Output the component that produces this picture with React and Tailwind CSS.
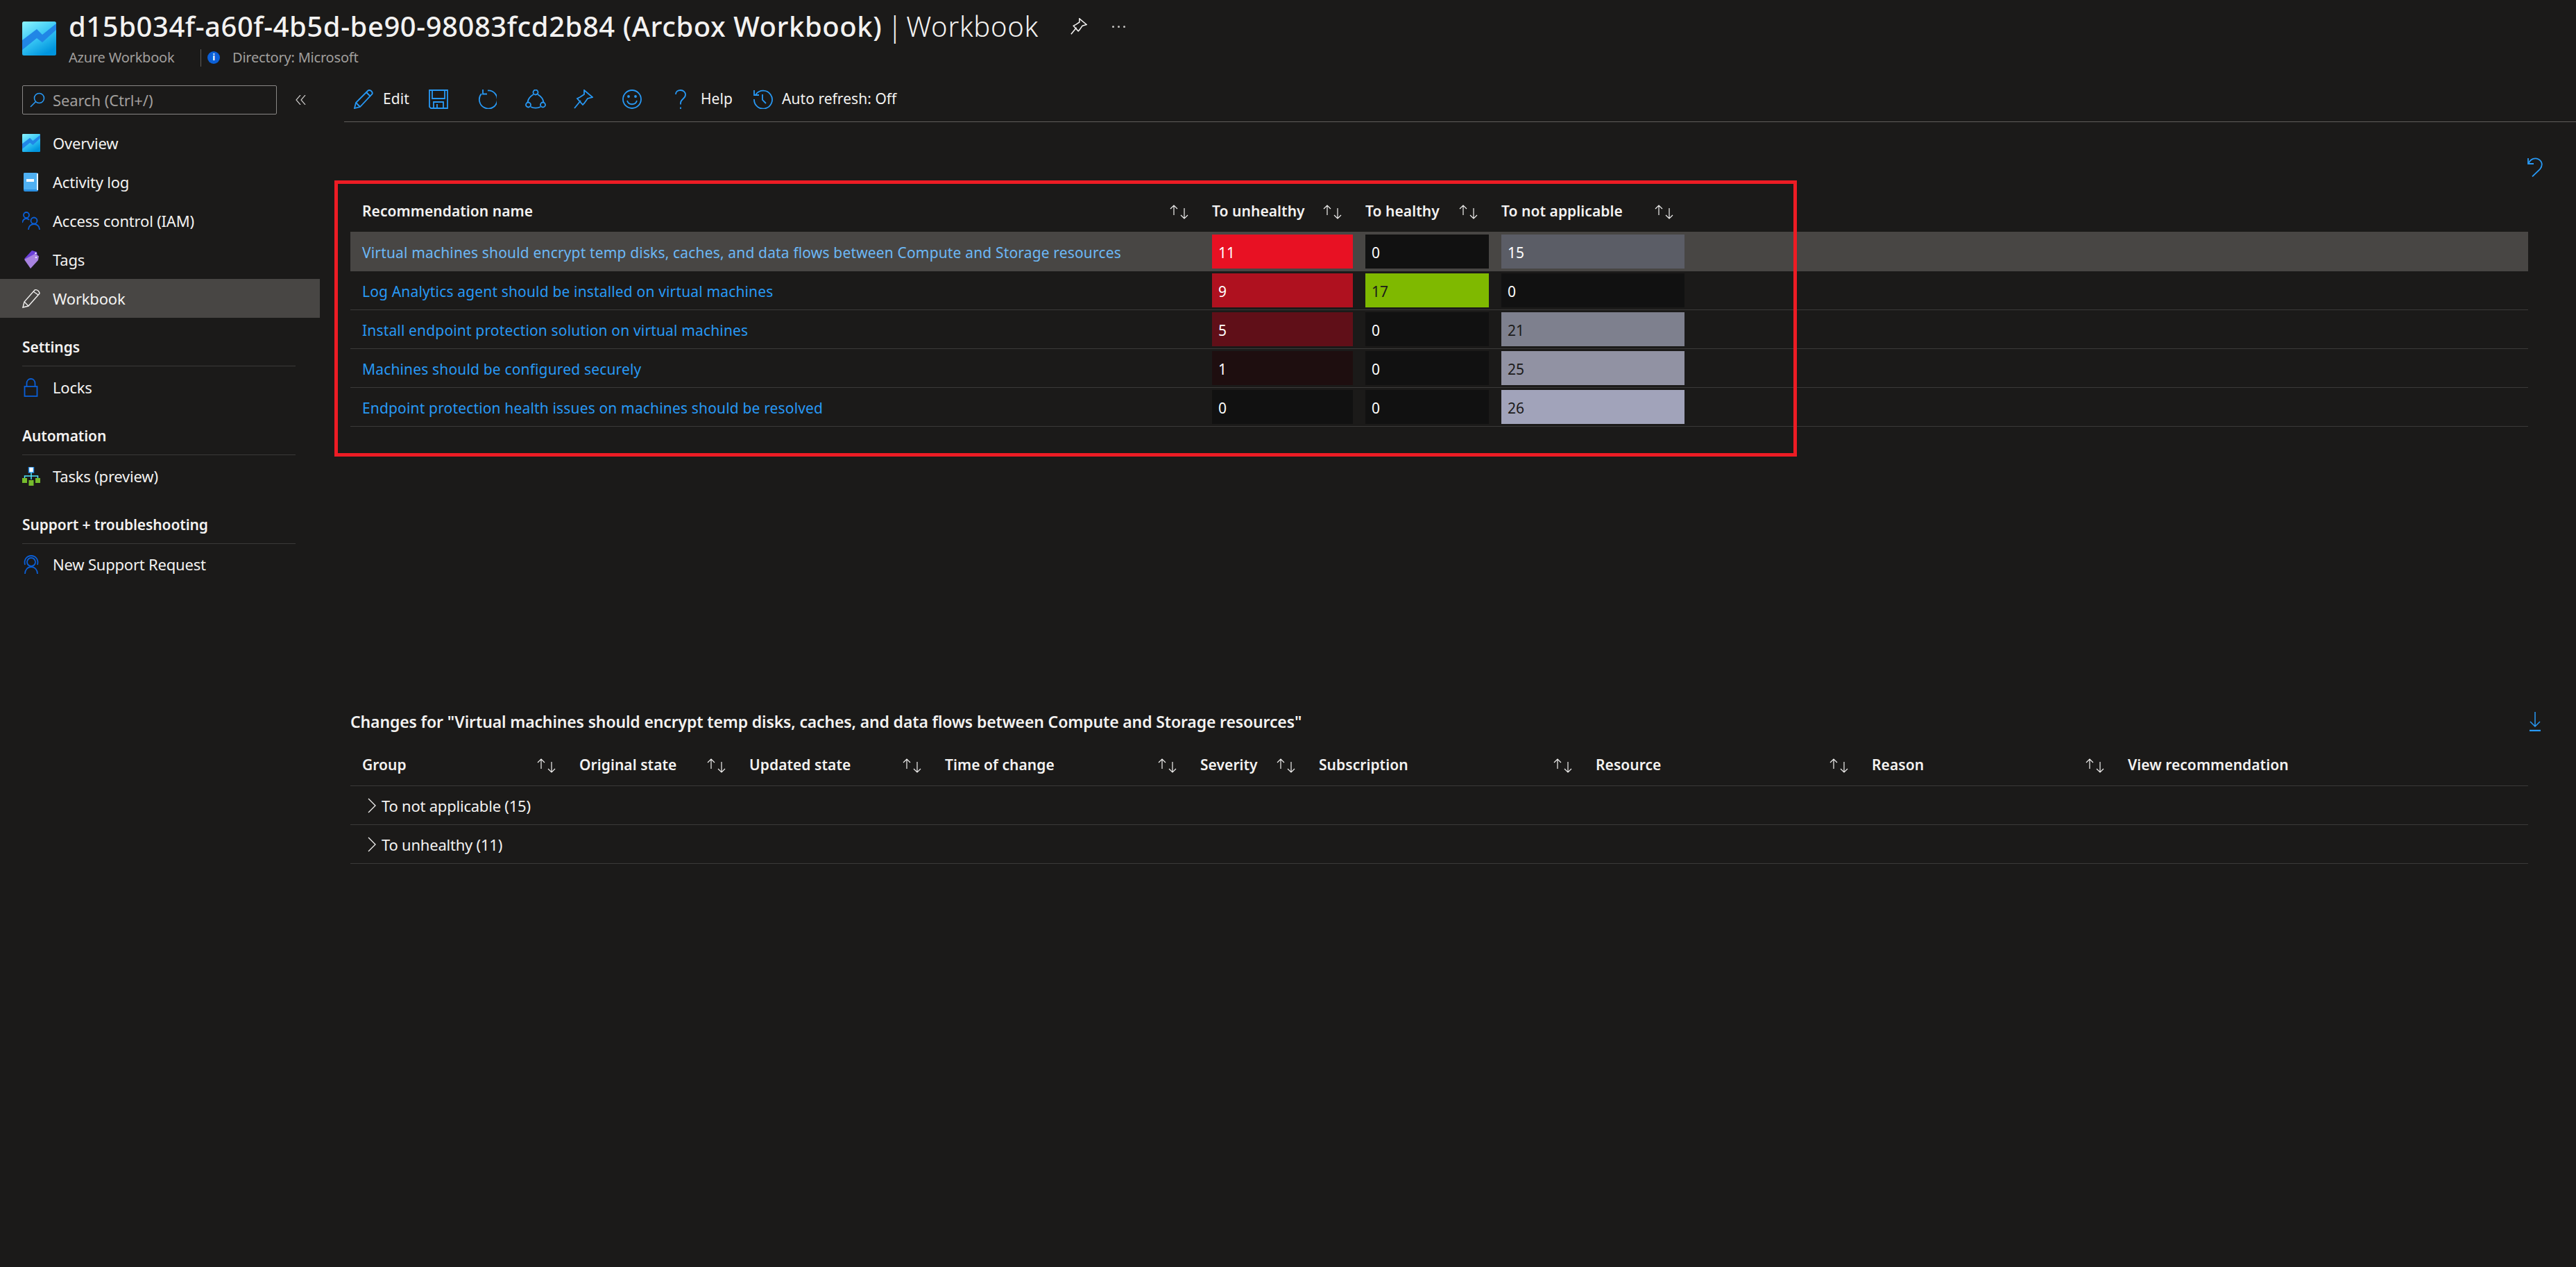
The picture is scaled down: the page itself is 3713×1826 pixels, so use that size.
const F = { fontFamily: '"Noto Sans", sans-serif' };

function Sort() {
  return (
    <svg width="29" height="21" viewBox="0 0 29 21" fill="none" stroke="#f3f2f1" strokeWidth="1.2" className="shrink-0">
      <path d="M7 15V1M2 6l5-5 5 5" />
      <path d="M22 5v15M17 15l5 5 5-5" />
    </svg>
  );
}

function Logo({ s }) {
  return (
    <svg width={s} height={s} viewBox="0 0 49 49" className="shrink-0">
      <defs>
        <linearGradient id={`lg${s}`} x1="0" y1="0" x2="0.6" y2="1">
          <stop offset="0" stopColor="#8cf4ff" />
          <stop offset="0.55" stopColor="#38c6f4" />
          <stop offset="1" stopColor="#0095de" />
        </linearGradient>
      </defs>
      <rect width="49" height="49" rx="2.5" fill={`url(#lg${s})`} />
      <path d="M0 27 L21 11 L29 19 L49 3 V12 L29 30 L21 24 L0 41 Z" fill="#2186e6" />
    </svg>
  );
}

const blue = '#0b5fd6';
const tb = '#2899f5';

function NavIcon({ k }) {
  if (k === 'overview') return <Logo s={26} />;
  if (k === 'log')
    return (
      <svg width="26" height="27" viewBox="0 0 26 27">
        <rect x="2" y="0" width="21" height="27" rx="2" fill="#2a8fe0" />
        <rect x="2" y="0" width="19" height="24" rx="1.5" fill="#4fb0f2" />
        <rect x="21" y="1" width="2" height="24" fill="#e6f3fc" />
        <rect x="6" y="9" width="11" height="4" fill="#f2f8fd" />
      </svg>
    );
  if (k === 'iam')
    return (
      <svg width="26" height="28" viewBox="0 0 26 28" fill="none" stroke={blue} strokeWidth="1.8">
        <circle cx="6" cy="6" r="4" />
        <path d="M0 17c1-4 3-6 6-6 2 0 3 .6 4 2" />
        <circle cx="17" cy="14" r="4.5" />
        <path d="M9 27c0-5 3.500-8 8-8s8 3 8 8" />
      </svg>
    );
  if (k === 'tags')
    return (
      <svg width="26" height="27" viewBox="0 0 26 27">
        <path d="M3 12 L14 0 L21 2 L22 7 L11 17 Z" fill="#6a3fd8" />
        <path d="M3 13 L18 5 L24 8 L23 14 L12 26 Z" fill="#a883e0" />
        <circle cx="19.500" cy="4" r="1.300" fill="#e9e2f8" />
        <circle cx="20" cy="10" r="1.300" fill="#e9e2f8" />
      </svg>
    );
  if (k === 'wb')
    return (
      <svg width="26" height="27" viewBox="0 0 26 27" fill="none" stroke="#f3f2f1" strokeWidth="1.4">
        <path d="M1 26 L3 18 L18 1 Q20 0 23 2 Q25 4 25 6 L9 24 Z" />
        <path d="M3 18 L9 24 M16 3 L23 8" />
      </svg>
    );
  if (k === 'lock')
    return (
      <svg width="26" height="27" viewBox="0 0 26 27" fill="none" stroke={blue} strokeWidth="1.8">
        <rect x="3.500" y="12" width="18" height="14" />
        <path d="M6.500 12V7.500C6.500 3.500 9 1 12.500 1s6 2.500 6 6.500V12" />
      </svg>
    );
  if (k === 'tasks')
    return (
      <svg width="26" height="27" viewBox="0 0 26 27">
        <rect x="9.500" y="0" width="7" height="8" fill="#fff" stroke="#1e88e5" strokeWidth="1.500" />
        <path d="M13 8v10M3.500 17v-4h19v4" fill="none" stroke="#50e6ff" strokeWidth="1.500" />
        <rect x="0" y="16" width="7" height="7" fill="#76bc2d" />
        <rect x="9.500" y="19" width="7" height="8" fill="#76bc2d" />
        <rect x="19" y="16" width="7" height="7" fill="#76bc2d" />
      </svg>
    );
  return (
    <svg width="26" height="27" viewBox="0 0 26 27" fill="none" stroke={blue} strokeWidth="1.8">
      <path d="M4 14C2 6 7 1 13 1s11 5 9 13" />
      <circle cx="13" cy="10" r="6" />
      <path d="M4 27c0-6 4-10 9-10s9 4 9 10" />
    </svg>
  );
}

function NavItem({ k, label, active, className = '' }) {
  return (
    <div className={`flex items-center h-[56px] pl-[32px] ${active ? 'bg-[#484644]' : ''} ${className}`}>
      <span className="w-[26px] flex justify-center shrink-0"><NavIcon k={k} /></span>
      <span className="ml-[18px] text-[22px] tracking-[-0.2px] text-[#f3f2f1]">{label}</span>
    </div>
  );
}

function NavHead({ label }) {
  return (
    <div className="h-[70px] ml-[32px] w-[394px] flex items-end pb-[12px] border-b border-[#3b3a39]">
      <span className="text-[21px] leading-[30px] font-semibold tracking-[-0.1px] text-[#f3f2f1]">{label}</span>
    </div>
  );
}

function TbIcon({ k }) {
  const p = { fill: 'none', stroke: tb, strokeWidth: 1.8 };
  if (k === 'edit')
    return (
      <svg width="28" height="28" viewBox="0 0 28 28" {...p}>
        <path d="M1 27 L3 19 L20 2 Q22 0 25 2 Q28 5 26 7 L9 25 Z" />
        <path d="M3 19 L9 25 M18 4 L24 10" />
      </svg>
    );
  if (k === 'save')
    return (
      <svg width="28" height="28" viewBox="0 0 28 28" {...p}>
        <path d="M1 1H27V27H3L1 25Z" />
        <path d="M5 1V13H23V1M7 27V18H21V27M12 21V27" />
      </svg>
    );
  if (k === 'refresh')
    return (
      <svg width="28" height="28" viewBox="0 0 28 28" {...p}>
        <path d="M6 6A13 13 0 1 0 15 1.500" />
        <path d="M8 0V6.500H14" />
      </svg>
    );
  if (k === 'share')
    return (
      <svg width="30" height="28" viewBox="0 0 30 28" {...p}>
        <circle cx="15" cy="4" r="3.500" />
        <circle cx="4.500" cy="22" r="3.500" />
        <circle cx="25.500" cy="22" r="3.500" />
        <path d="M12 7C7 10 4 14 3.500 18.500M18 7C23 10 26 14 26.500 18.500M8 25C12 27 18 27 22 25" />
      </svg>
    );
  if (k === 'pin')
    return (
      <svg width="28" height="28" viewBox="0 0 28 28" {...p}>
        <path d="M1 27L10 16M15 1L27 11 20 13 15 20 13 22 5 13 9 11 15 7Z" />
      </svg>
    );
  if (k === 'smile')
    return (
      <svg width="28" height="28" viewBox="0 0 28 28" {...p}>
        <circle cx="14" cy="14" r="13" />
        <circle cx="9" cy="10" r="1" />
        <circle cx="19" cy="10" r="1" />
        <path d="M7 16C9 23 19 23 21 16" />
      </svg>
    );
  if (k === 'help')
    return (
      <svg width="18" height="28" viewBox="0 0 18 28" {...p}>
        <path d="M2 7C2 3 5 1 9 1s7 3 7 6.500c0 6-7 6-7 12v2" />
        <path d="M9 25.500V28" />
      </svg>
    );
  return (
    <svg width="29" height="28" viewBox="0 0 29 28" {...p}>
      <path d="M4.500 7A13 13 0 1 1 2 14" />
      <path d="M2 1V8H9M14 7V15L19 20" />
    </svg>
  );
}

function TbLabel({ children }) {
  return <span className="text-[21px] tracking-[0.05px] text-[#f3f2f1] whitespace-nowrap">{children}</span>;
}

const rows = [
  { name: 'Virtual machines should encrypt temp disks, caches, and data flows between Compute and Storage resources',
    a: ['11', 'bg-[#e81123]', 'text-white'], b: ['0', 'bg-[#111111]', 'text-white'], c: ['15', 'bg-[#5b5d66]', 'text-white'] },
  { name: 'Log Analytics agent should be installed on virtual machines',
    a: ['9', 'bg-[#af111f]', 'text-white'], b: ['17', 'bg-[#7fb900]', 'text-[#1b1a19]'], c: ['0', 'bg-[#111111]', 'text-white'] },
  { name: 'Install endpoint protection solution on virtual machines',
    a: ['5', 'bg-[#600f18]', 'text-white'], b: ['0', 'bg-[#111111]', 'text-white'], c: ['21', 'bg-[#7e808e]', 'text-[#1b1a19]'] },
  { name: 'Machines should be configured securely',
    a: ['1', 'bg-[#1e0e0f]', 'text-white'], b: ['0', 'bg-[#111111]', 'text-white'], c: ['25', 'bg-[#9192a3]', 'text-[#1b1a19]'] },
  { name: 'Endpoint protection health issues on machines should be resolved',
    a: ['0', 'bg-[#111111]', 'text-white'], b: ['0', 'bg-[#111111]', 'text-white'], c: ['26', 'bg-[#a1a3ba]', 'text-[#1b1a19]'] },
];

function Cell({ d, w }) {
  return (
    <div className={`h-[49px] ${w} ${d[1]} ${d[2]} pl-[9px] flex items-center pt-[4px] text-[21px]`}>{d[0]}</div>
  );
}

function Head({ label, w, pl = 'pl-0' }) {
  return (
    <div className={`${w} ${pl} pr-[33px] shrink-0 flex items-center justify-between`}>
      <span className="text-[21px] font-semibold tracking-[0.05px] text-[#f3f2f1] whitespace-nowrap">{label}</span>
      <Sort />
    </div>
  );
}

const lower = [
  ['Group', 'w-[330px]', 'pl-[17px]'], ['Original state', 'w-[245px]'], ['Updated state', 'w-[282px]'], ['Time of change', 'w-[368px]'],
  ['Severity', 'w-[171px]'], ['Subscription', 'w-[399px]'], ['Resource', 'w-[398px]'], ['Reason', 'w-[369px]'],
];

export default function App() {
  return (
    <div className="w-full min-h-screen bg-[#1b1a19] overflow-hidden" style={F}>
      <header className="h-[110px] pt-[13px] pl-[32px] flex items-start">
        <div className="mt-[18px] mr-[18px]"><Logo s={49} /></div>
        <div>
          <div className="flex items-center h-[50px]">
            <h1 className="text-[40px] leading-[50px] text-[#f3f2f1] whitespace-nowrap">
              <span className="font-medium tracking-[0.55px]">d15b034f-a60f-4b5d-be90-98083fcd2b84 (Arcbox Workbook)</span>
              <span className="font-light tracking-[-2.5px]"> | </span>
              <span className="font-light tracking-[0.7px]">Workbook</span>
            </h1>
            <svg width="24" height="24" viewBox="0 0 28 28" fill="none" stroke="#f3f2f1" strokeWidth="1.800" className="ml-[46px]">
              <path d="M1 27L10 16M15 1L27 11 20 13 15 20 13 22 5 13 9 11 15 7Z" />
            </svg>
            <span className="ml-[36px] flex gap-[5px]">
              <i className="block w-[3px] h-[3px] bg-[#c8c6c4] rounded-full" />
              <i className="block w-[3px] h-[3px] bg-[#c8c6c4] rounded-full" />
              <i className="block w-[3px] h-[3px] bg-[#c8c6c4] rounded-full" />
            </span>
          </div>
          <div className="mt-[5px] flex items-center h-[30px] text-[20px] tracking-[-0.2px] text-[#a19f9d]">
            <span className="w-[190px] whitespace-nowrap">Azure Workbook</span>
            <span className="w-[1px] h-[25px] bg-[#605e5c]" />
            <span className="ml-[9px] w-[18px] h-[18px] rounded-full bg-[#0b5fd6] text-white text-[13px] font-bold flex items-center justify-center">i</span>
            <span className="ml-[18px] whitespace-nowrap">Directory: Microsoft</span>
          </div>
        </div>
      </header>

      <div className="flex">
        <aside className="w-[461px] shrink-0">
          <div className="flex items-center h-[42px] mt-[13px] ml-[32px] mb-[13px]">
            <div className="w-[367px] h-[42px] border border-[#8a8886] rounded-[2px] flex items-center pl-[10px]">
              <svg width="22" height="22" viewBox="0 0 22 22" fill="none" stroke={tb} strokeWidth="1.600">
                <circle cx="13.500" cy="8.500" r="7" />
                <path d="M8.500 13.500L1 21" />
              </svg>
              <span className="ml-[11px] text-[22px] tracking-[-0.1px] text-[#a19f9d]">Search (Ctrl+/)</span>
            </div>
            <svg width="15" height="14" viewBox="0 0 15 14" fill="none" stroke="#c8c6c4" strokeWidth="1.200" className="ml-[27px]">
              <path d="M7 0L1 7l6 7M14 0L8 7l6 7" />
            </svg>
          </div>
          <NavItem k="overview" label="Overview" />
          <NavItem k="log" label="Activity log" />
          <NavItem k="iam" label="Access control (IAM)" />
          <NavItem k="tags" label="Tags" />
          <NavItem k="wb" label="Workbook" active />
          <NavHead label="Settings" />
          <NavItem k="lock" label="Locks" className="mt-[2px]" />
          <NavHead label="Automation" />
          <NavItem k="tasks" label="Tasks (preview)" className="mt-[2px]" />
          <NavHead label="Support + troubleshooting" />
          <NavItem k="support" label="New Support Request" className="mt-[1px]" />
        </aside>

        <main className="flex-1 min-w-0">
          <div className="h-[66px] ml-[35px] pl-[14px] pt-[1px] border-b border-[#605e5c] flex items-center">
            <TbIcon k="edit" />
            <span className="ml-[14px] w-[38px]"><TbLabel>Edit</TbLabel></span>
            <span className="ml-[28px] flex"><TbIcon k="save" /></span>
            <span className="ml-[42px] flex"><TbIcon k="refresh" /></span>
            <span className="ml-[41px] flex"><TbIcon k="share" /></span>
            <span className="ml-[40px] flex"><TbIcon k="pin" /></span>
            <span className="ml-[42px] flex"><TbIcon k="smile" /></span>
            <span className="ml-[47px] flex"><TbIcon k="help" /></span>
            <span className="ml-[20px] w-[46px]"><TbLabel>Help</TbLabel></span>
            <span className="ml-[29px] flex"><TbIcon k="history" /></span>
            <span className="ml-[13px]"><TbLabel>Auto refresh: Off</TbLabel></span>
          </div>

          <div className="ml-[44px] mr-[69px]">
            <div className="mt-[51px] h-[28px] flex justify-end mr-[-21px]">
              <svg width="22" height="28" viewBox="0 0 22 28" fill="none" stroke={tb} strokeWidth="1.800">
                <path d="M1 1V9H9" />
                <path d="M1.500 8.500C5 1.500 11 0 16 2.500 22 6 22 12 18 17L7 27.500" />
              </svg>
            </div>

            <div className="relative mt-[21px]">
              <div className="h-[58px] flex items-center">
                <Head label="Recommendation name" w="w-[1242px]" pl="pl-[17px]" />
                <Head label="To unhealthy" w="w-[221px]" />
                <Head label="To healthy" w="w-[196px]" />
                <Head label="To not applicable" w="w-[282px]" />
              </div>
              {rows.map((r, i) => (
                <div key={r.name} className={`flex items-start border-b border-[#3b3a39] ${i === 0 ? 'h-[57px] pt-[4px] bg-[#484644] border-transparent' : 'h-[56px] pt-[3px]'}`}>
                  <div className={`w-[1242px] pl-[17px] h-[49px] flex items-center pt-[4px] text-[21px] tracking-[0.16px] whitespace-nowrap ${i === 0 ? 'text-[#6cb8f6]' : 'text-[#2899f5]'}`}>{r.name}</div>
                  <Cell d={r.a} w="w-[203px] mr-[18px]" />
                  <Cell d={r.b} w="w-[178px] mr-[18px]" />
                  <Cell d={r.c} w="w-[264px]" />
                </div>
              ))}
              <div className="absolute left-[-23px] top-[-16px] w-[2108px] h-[398px] border-[5px] border-[#ed1c24] pointer-events-none" />
            </div>

            <div className="mt-[410px] h-[30px] flex items-center justify-between mr-[-19px]">
              <h2 className="text-[23px] font-semibold tracking-[-0.14px] text-[#f3f2f1] whitespace-nowrap">Changes for "Virtual machines should encrypt temp disks, caches, and data flows between Compute and Storage resources"</h2>
              <svg width="18" height="28" viewBox="0 0 18 28" fill="none" stroke={tb} strokeWidth="1.500">
                <path d="M9 0V21M2 14l7 7 7-7" />
                <path d="M1 27H17" strokeWidth="2.500" />
              </svg>
            </div>

            <div className="mt-[20px] h-[58px] pb-[1px] flex items-center border-b border-[#3b3a39]">
              {lower.map(([l, w, pl]) => <Head key={l} label={l} w={w} pl={pl} />)}
              <span className="text-[21px] font-semibold tracking-[0.05px] text-[#f3f2f1] whitespace-nowrap">View recommendation</span>
            </div>
            {['To not applicable (15)', 'To unhealthy (11)'].map((t) => (
              <div key={t} className="h-[56px] flex items-center pl-[25px] pt-[1px] border-b border-[#3b3a39]">
                <svg width="12" height="22" viewBox="0 0 12 22" fill="none" stroke="#f3f2f1" strokeWidth="1.300">
                  <path d="M1 1L11 11 1 21" />
                </svg>
                <span className="ml-[8px] text-[22px] tracking-[-0.22px] text-[#f3f2f1]">{t}</span>
              </div>
            ))}
          </div>
        </main>
      </div>
    </div>
  );
}
